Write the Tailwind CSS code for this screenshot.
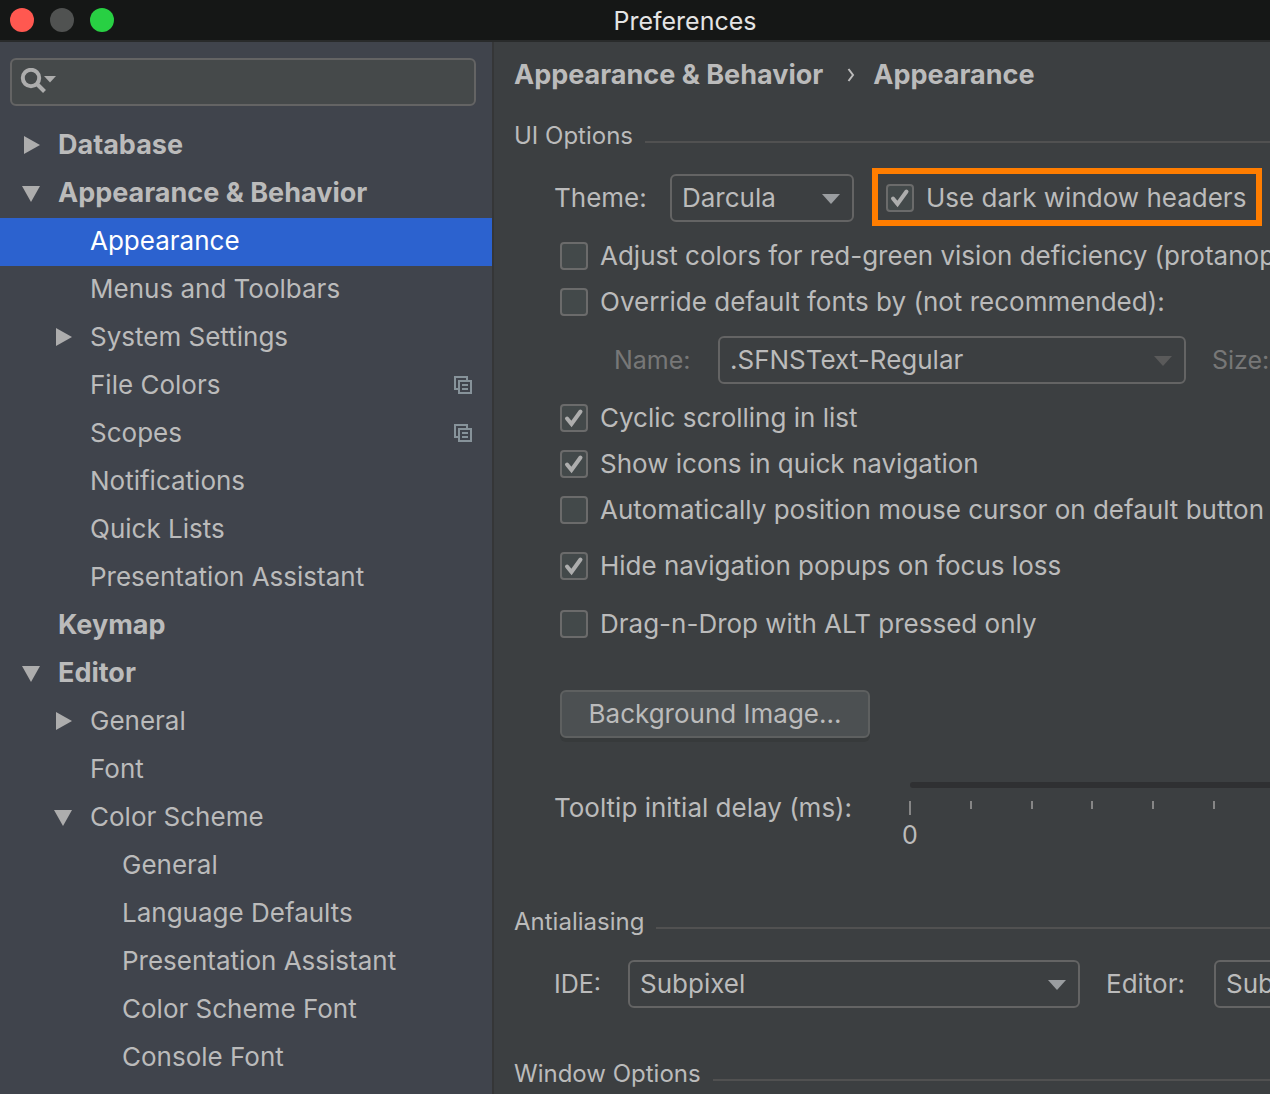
<!DOCTYPE html>
<html lang="en">
<head>
<meta charset="utf-8">
<meta name="viewport" content="width=device-width, initial-scale=1">
<title>Preferences</title>
<script src="https://cdn.jsdelivr.net/npm/@tailwindcss/browser@4"></script>
</head>
<body class="flex h-screen flex-col overflow-hidden whitespace-nowrap bg-[#3c3f41] font-['Inter',sans-serif] text-[26px] leading-8 text-[#bbbbbb]">
<svg class="hidden" aria-hidden="true">
  <symbol id="right" viewBox="0 0 18 18"><path d="M2 0L18 9L2 18z" fill="currentColor"/></symbol>
  <symbol id="down" viewBox="0 0 18 18"><path d="M0 2H18L9 18z" fill="currentColor"/></symbol>
  <symbol id="caret" viewBox="0 0 18 10"><path d="M0 0H18L9 10z" fill="currentColor"/></symbol>
  <symbol id="copy" viewBox="0 0 18 18"><path d="M4 13H1V1H13V4M5 5H17V17H5zM8 9H14M8 13H14" fill="none" stroke="currentColor" stroke-width="2"/></symbol>
  <symbol id="check" viewBox="0 0 28 28"><path d="M7 14.500L11.500 20L20.500 7.500" fill="none" stroke="#adadad" stroke-width="4" stroke-linecap="round"/></symbol>
</svg>

<header class="flex h-[42px] shrink-0 items-center border-b-2 border-[#292b2b] bg-[#151716] px-2.5">
  <div class="flex flex-1 gap-4">
    <button aria-label="Close" class="size-6 rounded-full bg-[#ff5850]"></button>
    <button aria-label="Minimize" class="size-6 rounded-full bg-[#505251]"></button>
    <button aria-label="Zoom" class="size-6 rounded-full bg-[#28d043]"></button>
  </div>
  <h1 class="pt-0.5 pl-[100px] text-[25px] text-[#e4e4e4]">Preferences</h1>
  <div class="flex-1"></div>
</header>

<div class="flex min-h-0 flex-1">
  <aside class="w-[494px] shrink-0 overflow-hidden border-r-2 border-[#353637] bg-[#40444c] pt-4">
    <div class="relative mr-4 ml-2.5">
      <input type="search" aria-label="Search settings" class="block h-12 w-full rounded-md border-2 border-[#646464] bg-[#45494a] pr-3 pl-14">
      <svg class="pointer-events-none absolute top-2.5 left-2.5 h-7 w-9 text-[#adadad]" viewBox="0 0 36 28"><circle cx="11" cy="10" r="8.200" fill="none" stroke="currentColor" stroke-width="4"/><path d="M16.500 15.500L24.500 23.500" fill="none" stroke="currentColor" stroke-width="4"/><path d="M24 8H36L30 14.500z" fill="currentColor"/></svg>
    </div>
    <nav class="mt-4 [&_a]:flex [&_a]:h-12 [&_a]:items-center [&_a]:pr-5 [&_a]:pb-0.5 [&_svg]:size-[18px] [&_svg]:text-[#adadad]">
      <a href="#" class="gap-[18px] pl-[22px] text-[27px] font-bold"><svg><use href="#right"/></svg>Database</a>
      <a href="#" class="gap-[18px] pl-[22px] text-[27px] font-bold"><svg><use href="#down"/></svg>Appearance &amp; Behavior</a>
      <a href="#" class="bg-[#2c62cf] pl-[90px] text-white" aria-current="page">Appearance</a>
      <a href="#" class="pl-[90px]">Menus and Toolbars</a>
      <a href="#" class="gap-[18px] pl-[54px]"><svg><use href="#right"/></svg>System Settings</a>
      <a href="#" class="justify-between pl-[90px]">File Colors<svg class="text-[#87939a]!"><use href="#copy"/></svg></a>
      <a href="#" class="justify-between pl-[90px]">Scopes<svg class="text-[#87939a]!"><use href="#copy"/></svg></a>
      <a href="#" class="pl-[90px]">Notifications</a>
      <a href="#" class="pl-[90px]">Quick Lists</a>
      <a href="#" class="pl-[90px]">Presentation Assistant</a>
      <a href="#" class="pl-[58px] text-[27px] font-bold">Keymap</a>
      <a href="#" class="gap-[18px] pl-[22px] text-[27px] font-bold"><svg><use href="#down"/></svg>Editor</a>
      <a href="#" class="gap-[18px] pl-[54px]"><svg><use href="#right"/></svg>General</a>
      <a href="#" class="pl-[90px]">Font</a>
      <a href="#" class="gap-[18px] pl-[54px]"><svg><use href="#down"/></svg>Color Scheme</a>
      <a href="#" class="pl-[122px]">General</a>
      <a href="#" class="pl-[122px]">Language Defaults</a>
      <a href="#" class="pl-[122px]">Presentation Assistant</a>
      <a href="#" class="pl-[122px]">Color Scheme Font</a>
      <a href="#" class="pl-[122px]">Console Font</a>
    </nav>
  </aside>

  <main class="min-w-0 flex-1 overflow-hidden pl-5">
    <div class="flex h-[66px] items-center text-[27px] font-bold">
      <span>Appearance &amp; Behavior</span>
      <svg class="mr-[18px] ml-6 h-4 w-2" viewBox="0 0 8 16"><path d="M1.500 2L6 8L1.500 14" fill="none" stroke="currentColor" stroke-width="2"/></svg>
      <h2>Appearance</h2>
    </div>

    <section>
      <h3 class="flex h-14 items-center gap-3 text-2xl">UI Options<span class="mt-3 h-0.5 flex-1 bg-[#515151]"></span></h3>
      <div class="mt-1 flex h-[60px] items-center pl-10">
        <label for="theme" class="w-[116px] shrink-0">Theme:</label>
        <div class="relative w-[184px] shrink-0">
          <select id="theme" class="block h-12 w-full appearance-none rounded-md border-2 border-[#646464] bg-[#3c3f41] pl-2.5"><option>Darcula</option></select>
          <svg class="pointer-events-none absolute top-5 right-3.5 h-2.5 w-[18px] text-[#9a9da0]"><use href="#caret"/></svg>
        </div>
        <label class="ml-[18px] flex h-[58px] w-[390px] shrink-0 items-center gap-3 self-start border-6 border-[#ff7d00] px-2 pt-0.5">
          <span class="relative size-7 shrink-0"><input type="checkbox" checked class="peer block size-7 appearance-none rounded-sm border-2 border-[#6b6b6b] bg-[#43494a]"><svg class="pointer-events-none absolute inset-0 hidden size-7 peer-checked:block"><use href="#check"/></svg></span>
          Use dark window headers
        </label>
      </div>

      <div class="mt-[5px] pl-[46px]">
        <label class="flex h-[46px] items-center gap-3">
          <span class="relative size-7 shrink-0"><input type="checkbox" class="peer block size-7 appearance-none rounded-sm border-2 border-[#6b6b6b] bg-[#43494a]"><svg class="pointer-events-none absolute inset-0 hidden size-7 peer-checked:block"><use href="#check"/></svg></span>
          Adjust colors for red-green vision deficiency (protanopia)
        </label>
        <label class="flex h-[46px] items-center gap-3">
          <span class="relative size-7 shrink-0"><input type="checkbox" class="peer block size-7 appearance-none rounded-sm border-2 border-[#6b6b6b] bg-[#43494a]"><svg class="pointer-events-none absolute inset-0 hidden size-7 peer-checked:block"><use href="#check"/></svg></span>
          Override default fonts by (not recommended):
        </label>
        <div class="flex h-[70px] items-center pl-[54px] text-[#777777]">
          <label for="fontname" class="w-[104px] shrink-0 text-[25px]">Name:</label>
          <div class="relative w-[468px] shrink-0">
            <select id="fontname" disabled class="block h-12 w-full appearance-none rounded-md border-2 border-[#646464] bg-[#3c3f41] pl-2.5 text-[#bbbbbb] opacity-100"><option>.SFNSText-Regular</option></select>
            <svg class="pointer-events-none absolute top-5 right-3.5 h-2.5 w-[18px] text-[#5a5a5a]"><use href="#caret"/></svg>
          </div>
          <span class="ml-[26px] text-[25px]">Size:</span>
        </div>
        <label class="flex h-[46px] items-center gap-3">
          <span class="relative size-7 shrink-0"><input type="checkbox" checked class="peer block size-7 appearance-none rounded-sm border-2 border-[#6b6b6b] bg-[#43494a]"><svg class="pointer-events-none absolute inset-0 hidden size-7 peer-checked:block"><use href="#check"/></svg></span>
          Cyclic scrolling in list
        </label>
        <label class="flex h-[46px] items-center gap-3">
          <span class="relative size-7 shrink-0"><input type="checkbox" checked class="peer block size-7 appearance-none rounded-sm border-2 border-[#6b6b6b] bg-[#43494a]"><svg class="pointer-events-none absolute inset-0 hidden size-7 peer-checked:block"><use href="#check"/></svg></span>
          Show icons in quick navigation
        </label>
        <label class="flex h-[46px] items-center gap-3">
          <span class="relative size-7 shrink-0"><input type="checkbox" class="peer block size-7 appearance-none rounded-sm border-2 border-[#6b6b6b] bg-[#43494a]"><svg class="pointer-events-none absolute inset-0 hidden size-7 peer-checked:block"><use href="#check"/></svg></span>
          Automatically position mouse cursor on default button
        </label>
        <label class="mt-2.5 flex h-[46px] items-center gap-3">
          <span class="relative size-7 shrink-0"><input type="checkbox" checked class="peer block size-7 appearance-none rounded-sm border-2 border-[#6b6b6b] bg-[#43494a]"><svg class="pointer-events-none absolute inset-0 hidden size-7 peer-checked:block"><use href="#check"/></svg></span>
          Hide navigation popups on focus loss
        </label>
        <label class="mt-3 flex h-[46px] items-center gap-3">
          <span class="relative size-7 shrink-0"><input type="checkbox" class="peer block size-7 appearance-none rounded-sm border-2 border-[#6b6b6b] bg-[#43494a]"><svg class="pointer-events-none absolute inset-0 hidden size-7 peer-checked:block"><use href="#check"/></svg></span>
          Drag-n-Drop with ALT pressed only
        </label>
        <button class="mt-[43px] block h-12 w-[310px] rounded-md border-2 border-[#5e6060] bg-[#4c5052] shadow-[0_4px_0_#373a3b]">Background Image...</button>
      </div>

      <div class="mt-11 flex pl-10">
        <label for="delay" class="mt-2.5 w-[355px] shrink-0">Tooltip initial delay (ms):</label>
        <div>
          <input id="delay" type="range" min="0" max="1200" value="900" class="ml-px block h-1.5 w-[1216px] appearance-none rounded-sm bg-[#2f3032]">
          <div class="mt-[13px] flex h-3.5 w-[306px] justify-between">
            <span class="h-3.5 w-0.5 bg-[#868686]"></span>
            <span class="h-2 w-0.5 bg-[#868686]"></span>
            <span class="h-2 w-0.5 bg-[#868686]"></span>
            <span class="h-2 w-0.5 bg-[#868686]"></span>
            <span class="h-2 w-0.5 bg-[#868686]"></span>
            <span class="h-2 w-0.5 bg-[#868686]"></span>
          </div>
          <div class="mt-1 -ml-[7px] w-4 text-center text-[25px]">0</div>
        </div>
      </div>
    </section>

    <section class="mt-[43px]">
      <h3 class="flex h-14 items-center gap-3 text-2xl">Antialiasing<span class="mt-3 h-0.5 flex-1 bg-[#515151]"></span></h3>
      <div class="mt-1 flex h-[60px] items-center pl-10">
        <label for="ide" class="w-[74px] shrink-0 text-[25px]">IDE:</label>
        <div class="relative w-[452px] shrink-0">
          <select id="ide" class="block h-12 w-full appearance-none rounded-md border-2 border-[#646464] bg-[#3c3f41] pl-2.5"><option>Subpixel</option></select>
          <svg class="pointer-events-none absolute top-5 right-3.5 h-2.5 w-[18px] text-[#9a9da0]"><use href="#caret"/></svg>
        </div>
        <label for="editor" class="ml-[26px] w-[108px] shrink-0">Editor:</label>
        <select id="editor" class="block h-12 w-[452px] shrink-0 appearance-none rounded-md border-2 border-[#646464] bg-[#3c3f41] pl-2.5"><option>Subpixel</option></select>
      </div>
    </section>

    <section class="mt-8">
      <h3 class="flex h-14 items-center gap-3 text-2xl">Window Options<span class="mt-3 h-0.5 flex-1 bg-[#515151]"></span></h3>
    </section>
  </main>
</div>
</body>
</html>
